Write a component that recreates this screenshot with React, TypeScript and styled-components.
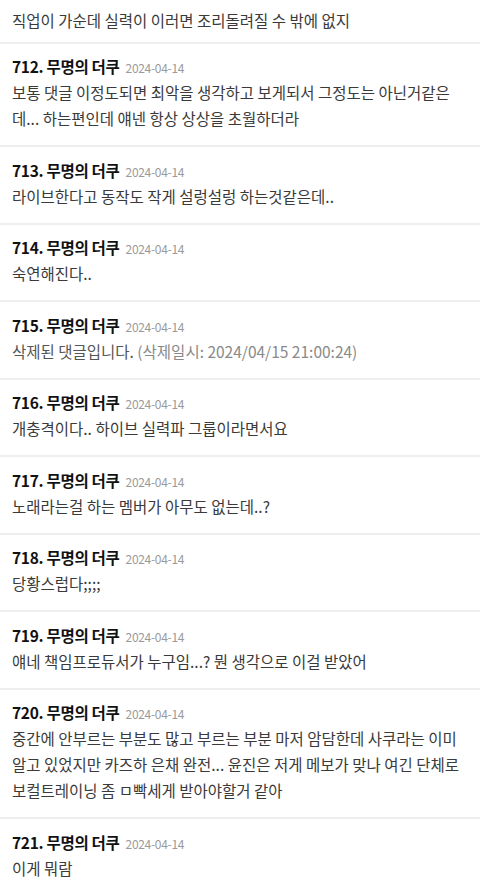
import React from "react";
import styled, { createGlobalStyle } from "styled-components";

interface Comment {
  no?: number;
  date?: string;
  text: string;
  deletedAt?: string;
}

const comments: Comment[] = [
  { text: "직업이 가순데 실력이 이러면 조리돌려질 수 밖에 없지" },
  {
    no: 712,
    date: "2024-04-14",
    text: "보통 댓글 이정도되면 최악을 생각하고 보게되서 그정도는 아닌거같은데... 하는편인데 얘넨 항상 상상을 초월하더라",
  },
  { no: 713, date: "2024-04-14", text: "라이브한다고 동작도 작게 설렁설렁 하는것같은데.." },
  { no: 714, date: "2024-04-14", text: "숙연해진다.." },
  {
    no: 715,
    date: "2024-04-14",
    text: "삭제된 댓글입니다.",
    deletedAt: "(삭제일시: 2024/04/15 21:00:24)",
  },
  { no: 716, date: "2024-04-14", text: "개충격이다.. 하이브 실력파 그룹이라면서요" },
  { no: 717, date: "2024-04-14", text: "노래라는걸 하는 멤버가 아무도 없는데..?" },
  { no: 718, date: "2024-04-14", text: "당황스럽다;;;;" },
  { no: 719, date: "2024-04-14", text: "얘네 책임프로듀서가 누구임...? 뭔 생각으로 이걸 받았어" },
  {
    no: 720,
    date: "2024-04-14",
    text: "중간에 안부르는 부분도 많고 부르는 부분 마저 암담한데 사쿠라는 이미 알고 있었지만 카즈하 은채 완전... 윤진은 저게 메보가 맞나 여긴 단체로 보컬트레이닝 좀 ㅁ빡세게 받아야할거 같아",
  },
  { no: 721, date: "2024-04-14", text: "이게 뭐람" },
];

export default function App() {
  return (
    <>
      <GlobalStyle />
      <List>
        {comments.map((c, i) => (
          <Item key={i} $partial={!c.no}>
            {c.no && (
              <Header>
                <Author>{c.no}. 무명의 더쿠</Author>
                <DateText>{c.date}</DateText>
              </Header>
            )}
            <Body $deleted={!!c.deletedAt}>
              {c.text}
              {c.deletedAt && <DeletedAt> {c.deletedAt}</DeletedAt>}
            </Body>
          </Item>
        ))}
      </List>
    </>
  );
}

const GlobalStyle = createGlobalStyle`
  body {
    margin: 0;
    background: #fff;
    font-family: "Noto Sans CJK KR", "Noto Sans", sans-serif;
  }
`;

const List = styled.ul`
  list-style: none;
  margin: 0;
  padding: 0;
  overflow: hidden;
  height: 895px;
`;

const Item = styled.li<{ $partial: boolean }>`
  padding: ${(p) => (p.$partial ? "7px 10px 9px 12px" : "10.2px 10px 14.3px 12px")};
  border-bottom: 2px solid #eeeeee;
`;

const Header = styled.div`
  display: flex;
  align-items: baseline;
  gap: 6px;
  height: 25px;
  line-height: 25px;
`;

const Author = styled.span`
  font-size: 15.5px;
  font-weight: 700;
  color: #111;
  letter-spacing: -0.3px;
`;

const DateText = styled.span`
  font-size: 12px;
  color: #9a9a9a;
  letter-spacing: -0.3px;
`;

const Body = styled.p<{ $deleted: boolean }>`
  margin: 0;
  font-size: 15.5px;
  line-height: 26px;
  color: ${(p) => (p.$deleted ? "#555" : "#3a3a3a")};
  word-break: break-all;
`;

const DeletedAt = styled.span`
  color: #8a8a8a;
`;
